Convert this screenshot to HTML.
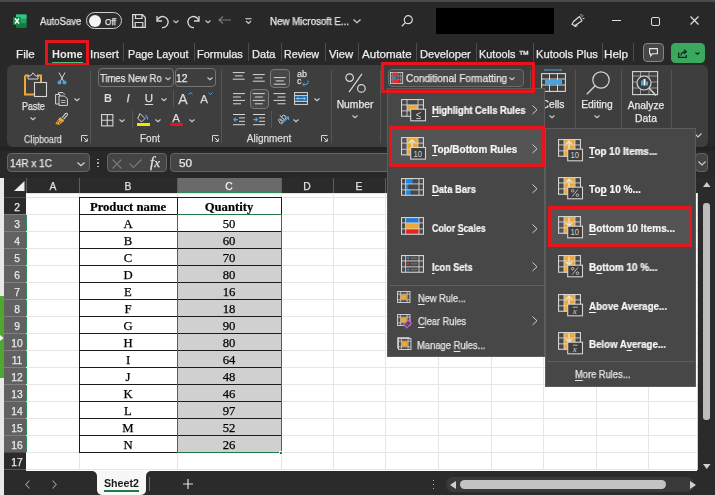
<!DOCTYPE html>
<html><head><meta charset="utf-8">
<style>
*{margin:0;padding:0;box-sizing:border-box}
html,body{width:715px;height:495px;overflow:hidden;background:#282828;font-family:"Liberation Sans",sans-serif;color:#e6e6e6;position:relative}
.a{position:absolute}
.t{position:absolute;white-space:nowrap;line-height:1;will-change:transform;-webkit-text-stroke:0.25px currentColor}
svg{position:absolute;overflow:visible}
u{text-decoration-thickness:1px;text-underline-offset:1.5px}
</style></head><body>
<div class="a" style="left:0px;top:0px;width:715px;height:2px;background:#4b4b4b;"></div>
<svg style="left:13px;top:14px;" width="14" height="14" viewBox="0 0 14 14"><rect x="3" y="0.5" width="10.5" height="13" rx="1" fill="#21a366"/>
 <rect x="3" y="0.5" width="10.5" height="4.3" fill="#33c481"/>
 <rect x="3" y="9.2" width="10.5" height="4.3" fill="#107c41"/>
 <rect x="0" y="3" width="8" height="8" rx="0.8" fill="#138a43"/>
 <path d="M2 4.5 L6 9.5 M6 4.5 L2 9.5" stroke="#fff" stroke-width="1.4"/></svg>
<div class="t" style="left:40.00px;top:17.1px;font-size:10px;color:#e8e8e8;font-weight:normal;font-family:'Liberation Sans',sans-serif;transform:scaleX(0.9535);transform-origin:0 0;">AutoSave</div>
<div class="a" style="left:86px;top:12px;width:36px;height:17px;background:#2e2e2e;border:1.4px solid #d0d0d0;border-radius:8.5px"></div>
<div class="a" style="left:88.8px;top:14.6px;width:12px;height:12px;background:#f4f4f4;border-radius:6px"></div>
<div class="t" style="left:104.50px;top:16.84px;font-size:9.5px;color:#e8e8e8;font-weight:normal;font-family:'Liberation Sans',sans-serif;transform:scaleX(0.8846);transform-origin:0 0;">Off</div>
<svg style="left:132px;top:14px;" width="14" height="14" viewBox="0 0 14 14"><path d="M0.7 0.7 H10.5 L13.3 3.5 V13.3 H0.7 Z" fill="none" stroke="#d8d8d8" stroke-width="1.3"/><path d="M3.5 0.7 V4.5 H10 V0.7" fill="none" stroke="#d8d8d8" stroke-width="1.2"/><path d="M3.2 13.3 V8.5 H10.8 V13.3" fill="none" stroke="#d8d8d8" stroke-width="1.2"/></svg>
<svg style="left:156px;top:15px;" width="13" height="13" viewBox="0 0 13 13"><path d="M1 1 V6 H6" fill="none" stroke="#d8d8d8" stroke-width="1.3"/><path d="M1.3 5.6 A5.5 5.5 0 1 1 6 12.5" fill="none" stroke="#d8d8d8" stroke-width="1.3"/></svg>
<svg style="left:173.0px;top:19.5px;" width="6" height="3.0" viewBox="0 0 6 3.0"><path d="M0.5 0.5 L3.0 2.7 L5.5 0.5" fill="none" stroke="#cfcfcf" stroke-width="1.1"/></svg>
<svg style="left:187px;top:15px;" width="13" height="13" viewBox="0 0 13 13"><path d="M12 1 V6 H7" fill="none" stroke="#d8d8d8" stroke-width="1.3"/><path d="M11.7 5.6 A5.5 5.5 0 1 0 7 12.5" fill="none" stroke="#d8d8d8" stroke-width="1.3"/></svg>
<svg style="left:204.5px;top:19.5px;" width="6" height="3.0" viewBox="0 0 6 3.0"><path d="M0.5 0.5 L3.0 2.7 L5.5 0.5" fill="none" stroke="#cfcfcf" stroke-width="1.1"/></svg>
<svg style="left:218px;top:16px;" width="13" height="8" viewBox="0 0 13 8"><path d="M5 0.5 L1 4 L5 7.5 M1 4 H13" fill="none" stroke="#7a7a7a" stroke-width="1.2"/></svg>
<svg style="left:245px;top:18px;" width="7" height="7" viewBox="0 0 7 7"><path d="M0.5 0.7 H6.5" stroke="#d0d0d0" stroke-width="1.1"/><path d="M1 3 L3.5 5.5 L6 3" fill="none" stroke="#d0d0d0" stroke-width="1.1"/></svg>
<div class="t" style="left:269.52px;top:17.1px;font-size:10px;color:#e8e8e8;font-weight:normal;font-family:'Liberation Sans',sans-serif;transform:scaleX(0.9750);transform-origin:0 0;">New Microsoft E...</div>
<svg style="left:353.0px;top:19.3px;" width="8" height="4.0" viewBox="0 0 8 4.0"><path d="M0.5 0.5 L4.0 3.7 L7.5 0.5" fill="none" stroke="#d0d0d0" stroke-width="1.2"/></svg>
<svg style="left:401px;top:15px;" width="12" height="12" viewBox="0 0 12 12"><circle cx="7.3" cy="4.7" r="4" fill="none" stroke="#d8d8d8" stroke-width="1.2"/><path d="M4.4 7.6 L0.8 11.2" stroke="#d8d8d8" stroke-width="1.3"/></svg>
<div class="a" style="left:436px;top:8px;width:117.5px;height:26px;background:#000;"></div>
<svg style="left:570.5px;top:14px;" width="14" height="13" viewBox="0 0 14 13"><path d="M1 10.5 L2.5 7.5 L8.5 2.5 L11 6.8 L4 11.5 Z" fill="none" stroke="#e0e0e0" stroke-width="1.1" stroke-linejoin="round"/><path d="M3 11.3 A1.6 1.6 0 1 0 6 10.3" fill="none" stroke="#e0e0e0" stroke-width="1"/><path d="M10.5 2.8 L12.3 1.5 M11.5 4.6 L13.5 4.4 M9.8 1.6 L10.4 0" stroke="#e0e0e0" stroke-width="0.9"/></svg>
<div class="a" style="left:611.5px;top:20px;width:9.0px;height:1.2px;background:#e0e0e0;"></div>
<div class="a" style="left:651px;top:16.8px;width:8.8px;height:8.8px;background:transparent;border:1.2px solid #e0e0e0;border-radius:2px"></div>
<svg style="left:690px;top:16px;" width="9" height="9" viewBox="0 0 9 9"><path d="M0.5 0.5 L8.5 8.5 M8.5 0.5 L0.5 8.5" stroke="#e0e0e0" stroke-width="1.2"/></svg>
<div class="t" style="left:15.87px;top:50.15px;font-size:10.3px;color:#ececec;font-weight:normal;font-family:'Liberation Sans',sans-serif;transform:scaleX(1.1333);transform-origin:0 0;">File</div>
<div class="t" style="left:52.00px;top:50.15px;font-size:10.3px;color:#ececec;font-weight:bold;font-family:'Liberation Sans',sans-serif;transform:scaleX(1.0690);transform-origin:0 0;-webkit-text-stroke:0;">Home</div>
<div class="t" style="left:89.88px;top:50.15px;font-size:10.3px;color:#ececec;font-weight:normal;font-family:'Liberation Sans',sans-serif;transform:scaleX(1.1200);transform-origin:0 0;">Insert</div>
<div class="t" style="left:127.75px;top:50.15px;font-size:10.3px;color:#ececec;font-weight:normal;font-family:'Liberation Sans',sans-serif;transform:scaleX(1.0474);transform-origin:0 0;">Page Layout</div>
<div class="t" style="left:197.43px;top:50.15px;font-size:10.3px;color:#ececec;font-weight:normal;font-family:'Liberation Sans',sans-serif;transform:scaleX(1.0690);transform-origin:0 0;">Formulas</div>
<div class="t" style="left:251.92px;top:50.15px;font-size:10.3px;color:#ececec;font-weight:normal;font-family:'Liberation Sans',sans-serif;transform:scaleX(1.0762);transform-origin:0 0;">Data</div>
<div class="t" style="left:284.46px;top:50.15px;font-size:10.3px;color:#ececec;font-weight:normal;font-family:'Liberation Sans',sans-serif;transform:scaleX(1.0394);transform-origin:0 0;">Review</div>
<div class="t" style="left:329.00px;top:50.15px;font-size:10.3px;color:#ececec;font-weight:normal;font-family:'Liberation Sans',sans-serif;transform:scaleX(1.0909);transform-origin:0 0;">View</div>
<div class="t" style="left:361.80px;top:50.15px;font-size:10.3px;color:#ececec;font-weight:normal;font-family:'Liberation Sans',sans-serif;transform:scaleX(1.1273);transform-origin:0 0;">Automate</div>
<div class="t" style="left:419.52px;top:50.15px;font-size:10.3px;color:#ececec;font-weight:normal;font-family:'Liberation Sans',sans-serif;transform:scaleX(1.0826);transform-origin:0 0;">Developer</div>
<div class="t" style="left:478.94px;top:50.15px;font-size:10.3px;color:#ececec;font-weight:normal;font-family:'Liberation Sans',sans-serif;transform:scaleX(1.0609);transform-origin:0 0;">Kutools ™</div>
<div class="t" style="left:536.12px;top:50.15px;font-size:10.3px;color:#ececec;font-weight:normal;font-family:'Liberation Sans',sans-serif;transform:scaleX(1.0821);transform-origin:0 0;">Kutools Plus</div>
<div class="t" style="left:604.36px;top:50.15px;font-size:10.3px;color:#ececec;font-weight:normal;font-family:'Liberation Sans',sans-serif;transform:scaleX(1.1400);transform-origin:0 0;">Help</div>
<div class="a" style="left:123px;top:43px;width:1px;height:18px;background:#4d4d4d;"></div>
<div class="a" style="left:194.3px;top:43px;width:1px;height:18px;background:#4d4d4d;"></div>
<div class="a" style="left:248.4px;top:43px;width:1px;height:18px;background:#4d4d4d;"></div>
<div class="a" style="left:281.3px;top:43px;width:1px;height:18px;background:#4d4d4d;"></div>
<div class="a" style="left:325.3px;top:43px;width:1px;height:18px;background:#4d4d4d;"></div>
<div class="a" style="left:357.5px;top:43px;width:1px;height:18px;background:#4d4d4d;"></div>
<div class="a" style="left:416px;top:43px;width:1px;height:18px;background:#4d4d4d;"></div>
<div class="a" style="left:476px;top:43px;width:1px;height:18px;background:#4d4d4d;"></div>
<div class="a" style="left:533px;top:43px;width:1px;height:18px;background:#4d4d4d;"></div>
<div class="a" style="left:602px;top:43px;width:1px;height:18px;background:#4d4d4d;"></div>
<div class="a" style="left:633px;top:43px;width:1px;height:18px;background:#4d4d4d;"></div>
<div class="a" style="left:52px;top:61.5px;width:31px;height:1.8px;background:#4fc27a;border-radius:1px"></div>
<div class="a" style="left:45.2px;top:40.3px;width:44.3px;height:25.5px;background:transparent;border:3.2px solid #e8141c"></div>
<div class="a" style="left:643.4px;top:42.9px;width:21.1px;height:19.6px;background:#474747;border:1.2px solid #858585;border-radius:4px"></div>
<svg style="left:649.3px;top:48.3px;" width="9" height="8.5" viewBox="0 0 9 8.5"><path d="M0.6 0.6 H8.4 V5.8 H3.5 L1.6 7.8 V5.8 H0.6 Z" fill="none" stroke="#e8e8e8" stroke-width="1.1"/></svg>
<div class="a" style="left:671.2px;top:42.9px;width:33.5px;height:20.1px;background:#3aa95e;border-radius:4.5px"></div>
<svg style="left:677.7px;top:49px;" width="10" height="9" viewBox="0 0 10 9"><path d="M0.7 3.5 V8.3 H8.3 V6" fill="none" stroke="#152a1c" stroke-width="1.3"/><path d="M3 6.5 C3 3.8 5 2.8 7.8 2.8 M6 0.8 L8.3 2.8 L6 4.8" fill="none" stroke="#152a1c" stroke-width="1.3"/></svg>
<svg style="left:695.3px;top:52.25px;" width="5" height="2.5" viewBox="0 0 5 2.5"><path d="M0.5 0.5 L2.5 2.2 L4.5 0.5" fill="none" stroke="#152a1c" stroke-width="1.3"/></svg>
<div class="a" style="left:0px;top:146px;width:715px;height:5px;background:#232323;"></div>
<div class="a" style="left:6.7px;top:64.6px;width:701px;height:82px;background:#3e3e3e;border-radius:6px"></div>
<svg style="left:24px;top:72px;" width="24" height="25" viewBox="0 0 24 25"><path d="M1 3.5 H5 M13 3.5 H17 V10 M1 3.5 V22.5 H10" fill="none" stroke="#f0a830" stroke-width="2"/>
<path d="M4 7 V4 H6.5 L9 0.8 L11.5 4 H14 V7 Z" fill="#3c3c3c" stroke="#d6d6d6" stroke-width="1"/>
<rect x="10.5" y="10.5" width="12" height="14" fill="#3c3c3c" stroke="#d6d6d6" stroke-width="1.1"/></svg>
<div class="t" style="left:21.73px;top:102.35px;font-size:10.3px;color:#e8e8e8;font-weight:normal;font-family:'Liberation Sans',sans-serif;transform:scaleX(0.8680);transform-origin:0 0;">Paste</div>
<svg style="left:30.4px;top:117.0px;" width="6" height="3.0" viewBox="0 0 6 3.0"><path d="M0.5 0.5 L3.0 2.7 L5.5 0.5" fill="none" stroke="#d0d0d0" stroke-width="1.1"/></svg>
<svg style="left:57px;top:72px;" width="10" height="13" viewBox="0 0 10 13"><path d="M2 0.5 L6.5 9 M8 0.5 L3.5 9" stroke="#d6d6d6" stroke-width="1"/><circle cx="2.5" cy="10.5" r="2" fill="#4aa3df"/><circle cx="7.5" cy="10.5" r="2" fill="#4aa3df"/></svg>
<svg style="left:55px;top:92px;" width="13" height="14" viewBox="0 0 13 14"><path d="M3.5 3 V0.6 H8 L10 2.6" fill="none" stroke="#d6d6d6" stroke-width="1"/><path d="M0.6 2.5 H5 V12 H0.6 Z" fill="none" stroke="#d6d6d6" stroke-width="1"/><path d="M4 4 H9.5 L12.4 6.9 V13.4 H4 Z" fill="#3c3c3c" stroke="#d6d6d6" stroke-width="1"/><path d="M6 8.5 H10.5 M6 10.5 H10.5" stroke="#d6d6d6" stroke-width="0.8"/></svg>
<svg style="left:73.6px;top:97.5px;" width="6" height="3.0" viewBox="0 0 6 3.0"><path d="M0.5 0.5 L3.0 2.7 L5.5 0.5" fill="none" stroke="#d0d0d0" stroke-width="1.1"/></svg>
<svg style="left:55px;top:112px;" width="13" height="13" viewBox="0 0 13 13"><path d="M7 6 L10.5 1.5 A1.2 1.2 0 0 1 12.3 3 L8.5 7.3" fill="none" stroke="#d6d6d6" stroke-width="1.1"/><path d="M0.8 11.5 L5 5.5 L8.8 8.8 L4 12.5 Z" fill="#f0a830" stroke="#f0a830" stroke-width="0.8"/><path d="M4 8 L2 11 M6 9 L4 12" stroke="#3c3c3c" stroke-width="0.7"/></svg>
<div class="t" style="left:24.20px;top:134.5px;font-size:10px;color:#dcdcdc;font-weight:normal;font-family:'Liberation Sans',sans-serif;transform:scaleX(0.8791);transform-origin:0 0;">Clipboard</div>
<svg style="left:81px;top:135px;" width="7" height="7" viewBox="0 0 7 7"><path d="M0.5 6.5 V0.5 H6.5" fill="none" stroke="#d6d6d6" stroke-width="1"/><path d="M2.5 2.5 L6 6 M3.5 6.3 H6.3 V3.5" fill="none" stroke="#d6d6d6" stroke-width="1"/></svg>
<div class="a" style="left:90px;top:70px;width:1px;height:73px;background:#555555;"></div>
<div class="a" style="left:97.5px;top:67.8px;width:76px;height:19.5px;background:transparent;border:1px solid #747474;border-radius:4px"></div>
<div class="t" style="left:100.10px;top:73.95px;font-size:10.3px;color:#e8e8e8;font-weight:normal;font-family:'Liberation Sans',sans-serif;transform:scaleX(0.9179);transform-origin:0 0;">Times New Ro</div>
<svg style="left:165.0px;top:76.5px;" width="6" height="3.0" viewBox="0 0 6 3.0"><path d="M0.5 0.5 L3.0 2.7 L5.5 0.5" fill="none" stroke="#d0d0d0" stroke-width="1.1"/></svg>
<div class="a" style="left:175px;top:67.8px;width:40.5px;height:19.5px;background:transparent;border:1px solid #747474;border-radius:4px"></div>
<div class="t" style="left:176.29px;top:73.95px;font-size:10.3px;color:#e8e8e8;font-weight:normal;font-family:'Liberation Sans',sans-serif;transform:scaleX(1.0100);transform-origin:0 0;">12</div>
<svg style="left:207.0px;top:76.5px;" width="6" height="3.0" viewBox="0 0 6 3.0"><path d="M0.5 0.5 L3.0 2.7 L5.5 0.5" fill="none" stroke="#d0d0d0" stroke-width="1.1"/></svg>
<div class="t" style="left:7.599999999999994px;width:200px;text-align:center;top:93.41px;font-size:11px;color:#dcdcdc;font-weight:bold;font-family:'Liberation Sans',sans-serif;-webkit-text-stroke:0;">B</div>
<div class="t" style="left:28.30000000000001px;width:200px;text-align:center;top:93.16px;font-size:11.5px;color:#dcdcdc;font-weight:normal;font-family:'Liberation Sans',sans-serif;"><i>I</i></div>
<div class="t" style="left:49px;width:200px;text-align:center;top:92.66px;font-size:11.5px;color:#dcdcdc;font-weight:normal;font-family:'Liberation Sans',sans-serif;"><u>U</u></div>
<svg style="left:161.3px;top:97.5px;" width="6" height="3.0" viewBox="0 0 6 3.0"><path d="M0.5 0.5 L3.0 2.7 L5.5 0.5" fill="none" stroke="#d0d0d0" stroke-width="1.1"/></svg>
<div class="a" style="left:173px;top:90px;width:1px;height:18px;background:#555555;"></div>
<div class="t" style="left:83.30000000000001px;width:200px;text-align:center;top:91.94px;font-size:14px;color:#dcdcdc;font-weight:normal;font-family:'Liberation Sans',sans-serif;">A</div>
<svg style="left:187.5px;top:92px;" width="5" height="3" viewBox="0 0 5 3"><path d="M0.5 2.5 L2.5 0.5 L4.5 2.5" fill="none" stroke="#4aa3df" stroke-width="1"/></svg>
<div class="t" style="left:104px;width:200px;text-align:center;top:94.16px;font-size:11.5px;color:#dcdcdc;font-weight:normal;font-family:'Liberation Sans',sans-serif;">A</div>
<svg style="left:208px;top:92px;" width="5" height="3" viewBox="0 0 5 3"><path d="M0.5 0.5 L2.5 2.5 L4.5 0.5" fill="none" stroke="#4aa3df" stroke-width="1"/></svg>
<svg style="left:101px;top:113.5px;" width="12.5" height="12.5" viewBox="0 0 12.5 12.5"><rect x="0.6" y="0.6" width="11.3" height="11.3" fill="none" stroke="#d6d6d6" stroke-width="1.1"/><path d="M6.25 0.6 V11.9 M0.6 6.25 H11.9" stroke="#d6d6d6" stroke-width="1.1"/></svg>
<svg style="left:119.3px;top:118.5px;" width="6" height="3.0" viewBox="0 0 6 3.0"><path d="M0.5 0.5 L3.0 2.7 L5.5 0.5" fill="none" stroke="#d0d0d0" stroke-width="1.1"/></svg>
<div class="a" style="left:131.5px;top:111px;width:1px;height:17px;background:#555555;"></div>
<svg style="left:136.5px;top:112px;" width="13" height="15" viewBox="0 0 13 15"><path d="M3 1.5 L8 6.5 L4.5 10 L0.8 6.3 Z" fill="none" stroke="#d6d6d6" stroke-width="1"/><path d="M8.5 3 Q11 5 10.5 7.5" fill="none" stroke="#4aa3df" stroke-width="1.1"/><rect x="0" y="11" width="13" height="3" fill="#f7e400"/></svg>
<svg style="left:155.0px;top:118.5px;" width="6" height="3.0" viewBox="0 0 6 3.0"><path d="M0.5 0.5 L3.0 2.7 L5.5 0.5" fill="none" stroke="#d0d0d0" stroke-width="1.1"/></svg>
<div class="t" style="left:76.30000000000001px;width:200px;text-align:center;top:113.16px;font-size:11.5px;color:#dcdcdc;font-weight:normal;font-family:'Liberation Sans',sans-serif;">A</div>
<div class="a" style="left:170px;top:123px;width:13px;height:3px;background:#e3141c;"></div>
<svg style="left:188.5px;top:118.5px;" width="6" height="3.0" viewBox="0 0 6 3.0"><path d="M0.5 0.5 L3.0 2.7 L5.5 0.5" fill="none" stroke="#d0d0d0" stroke-width="1.1"/></svg>
<div class="t" style="left:50px;width:200px;text-align:center;top:134.4px;font-size:10px;color:#dcdcdc;font-weight:normal;font-family:'Liberation Sans',sans-serif;">Font</div>
<svg style="left:212px;top:135px;" width="7" height="7" viewBox="0 0 7 7"><path d="M0.5 6.5 V0.5 H6.5" fill="none" stroke="#d6d6d6" stroke-width="1"/><path d="M2.5 2.5 L6 6 M3.5 6.3 H6.3 V3.5" fill="none" stroke="#d6d6d6" stroke-width="1"/></svg>
<div class="a" style="left:221px;top:70px;width:1px;height:73px;background:#555555;"></div>
<svg style="left:232.5px;top:71.5px;" width="12" height="12" viewBox="0 0 12 12"><path d="M-0.25 0.6 H11.75" stroke="#d6d6d6" stroke-width="1"/><path d="M1.75 3.9 H9.75" stroke="#d6d6d6" stroke-width="1"/><path d="M-0.25 7.199999999999999 H11.75" stroke="#d6d6d6" stroke-width="1"/></svg>
<svg style="left:253px;top:73.8px;" width="12" height="12" viewBox="0 0 12 12"><path d="M-0.25 0.6 H11.75" stroke="#d6d6d6" stroke-width="1"/><path d="M1.75 3.9 H9.75" stroke="#d6d6d6" stroke-width="1"/><path d="M-0.25 7.199999999999999 H11.75" stroke="#d6d6d6" stroke-width="1"/></svg>
<div class="a" style="left:270px;top:68.5px;width:20px;height:19px;background:transparent;border:1px solid #7a7a7a;border-radius:4px;background:#474747"></div>
<svg style="left:274px;top:76.7px;" width="12" height="12" viewBox="0 0 12 12"><path d="M-0.25 0.6 H11.75" stroke="#d6d6d6" stroke-width="1"/><path d="M1.75 3.9 H9.75" stroke="#d6d6d6" stroke-width="1"/><path d="M-0.25 7.199999999999999 H11.75" stroke="#d6d6d6" stroke-width="1"/></svg>
<div class="t" style="left:297.00px;top:69.59px;font-size:9px;color:#dcdcdc;font-weight:normal;font-family:'Liberation Sans',sans-serif;">ab</div>
<div class="t" style="left:297.00px;top:77.09px;font-size:9px;color:#dcdcdc;font-weight:normal;font-family:'Liberation Sans',sans-serif;">c</div>
<svg style="left:302px;top:80px;" width="7" height="6" viewBox="0 0 7 6"><path d="M6 0.5 V2.5 Q6 4.5 3 4.5 H0.8 M2.5 3 L0.8 4.5 L2.5 6" fill="none" stroke="#4aa3df" stroke-width="1"/></svg>
<svg style="left:232.5px;top:92.8px;" width="12" height="12" viewBox="0 0 12 12"><path d="M0 0.6 H12" stroke="#d6d6d6" stroke-width="1"/><path d="M0 4.0 H8" stroke="#d6d6d6" stroke-width="1"/><path d="M0 7.3999999999999995 H12" stroke="#d6d6d6" stroke-width="1"/><path d="M0 10.799999999999999 H8" stroke="#d6d6d6" stroke-width="1"/></svg>
<div class="a" style="left:249.5px;top:89px;width:19.5px;height:20px;background:transparent;border:1px solid #7a7a7a;border-radius:4px;background:#474747"></div>
<svg style="left:253px;top:92.8px;" width="12" height="12" viewBox="0 0 12 12"><path d="M-0.25 0.6 H11.75" stroke="#d6d6d6" stroke-width="1"/><path d="M1.75 4.0 H9.75" stroke="#d6d6d6" stroke-width="1"/><path d="M-0.25 7.3999999999999995 H11.75" stroke="#d6d6d6" stroke-width="1"/><path d="M1.75 10.799999999999999 H9.75" stroke="#d6d6d6" stroke-width="1"/></svg>
<svg style="left:274px;top:92.8px;" width="12" height="12" viewBox="0 0 12 12"><path d="M-0.5 0.6 H11.5" stroke="#d6d6d6" stroke-width="1"/><path d="M3.5 4.0 H11.5" stroke="#d6d6d6" stroke-width="1"/><path d="M-0.5 7.3999999999999995 H11.5" stroke="#d6d6d6" stroke-width="1"/><path d="M3.5 10.799999999999999 H11.5" stroke="#d6d6d6" stroke-width="1"/></svg>
<svg style="left:294px;top:92px;" width="14" height="13" viewBox="0 0 14 13"><rect x="0.6" y="0.6" width="12.8" height="11.8" fill="none" stroke="#d6d6d6" stroke-width="1"/><path d="M0.6 3.5 H13.4 M0.6 9.5 H13.4" stroke="#d6d6d6" stroke-width="0.9"/><rect x="1" y="4" width="12" height="5" fill="#2a6fa5"/><path d="M2.5 6.5 H11.5 M4.5 5 L2.5 6.5 L4.5 8 M9.5 5 L11.5 6.5 L9.5 8" fill="none" stroke="#7cc4f2" stroke-width="0.9"/></svg>
<svg style="left:313.8px;top:97.5px;" width="6" height="3.0" viewBox="0 0 6 3.0"><path d="M0.5 0.5 L3.0 2.7 L5.5 0.5" fill="none" stroke="#d0d0d0" stroke-width="1.1"/></svg>
<svg style="left:232.5px;top:113.8px;" width="12" height="12" viewBox="0 0 12 12"><path d="M0 0.5 H12 M6 3.9 H12 M6 7.3 H12 M0 10.7 H12" stroke="#d6d6d6" stroke-width="1"/><path d="M0.8 5.6 H5 M2.8 3.6 L0.8 5.6 L2.8 7.6" fill="none" stroke="#4aa3df" stroke-width="1.1"/></svg>
<svg style="left:253px;top:113.8px;" width="12" height="12" viewBox="0 0 12 12"><path d="M0 0.5 H12 M6 3.9 H12 M6 7.3 H12 M0 10.7 H12" stroke="#d6d6d6" stroke-width="1"/><path d="M0.3 5.6 H4.6 M2.6 3.6 L4.6 5.6 L2.6 7.6" fill="none" stroke="#4aa3df" stroke-width="1.1"/></svg>
<div class="a" style="left:271px;top:111px;width:1px;height:17px;background:#555555;"></div>
<svg style="left:275.5px;top:112px;" width="14" height="14" viewBox="0 0 14 14"><text x="0" y="10" font-size="9" fill="#d6d6d6" transform="rotate(-45 5 6)" font-family="Liberation Sans">ab</text><path d="M5 12.5 L12.5 5 M9.5 5 H12.5 V8" fill="none" stroke="#4aa3df" stroke-width="1.1"/></svg>
<svg style="left:293.0px;top:118.5px;" width="6" height="3.0" viewBox="0 0 6 3.0"><path d="M0.5 0.5 L3.0 2.7 L5.5 0.5" fill="none" stroke="#d0d0d0" stroke-width="1.1"/></svg>
<div class="t" style="left:169px;width:200px;text-align:center;top:134.4px;font-size:10px;color:#dcdcdc;font-weight:normal;font-family:'Liberation Sans',sans-serif;">Alignment</div>
<svg style="left:321px;top:135px;" width="7" height="7" viewBox="0 0 7 7"><path d="M0.5 6.5 V0.5 H6.5" fill="none" stroke="#d6d6d6" stroke-width="1"/><path d="M2.5 2.5 L6 6 M3.5 6.3 H6.3 V3.5" fill="none" stroke="#d6d6d6" stroke-width="1"/></svg>
<div class="a" style="left:331px;top:70px;width:1px;height:73px;background:#555555;"></div>
<svg style="left:344.5px;top:73px;" width="21" height="20" viewBox="0 0 21 20"><circle cx="4.6" cy="4.6" r="3.8" fill="none" stroke="#d8d8d8" stroke-width="1.2"/><circle cx="16.4" cy="15.4" r="3.8" fill="none" stroke="#d8d8d8" stroke-width="1.2"/><path d="M17 0.8 L4 19.2" stroke="#d8d8d8" stroke-width="1.2"/></svg>
<div class="t" style="left:254.8px;width:200px;text-align:center;top:99.75px;font-size:10.3px;color:#e8e8e8;font-weight:normal;font-family:'Liberation Sans',sans-serif;">Number</div>
<svg style="left:351.8px;top:114.8px;" width="6" height="3.0" viewBox="0 0 6 3.0"><path d="M0.5 0.5 L3.0 2.7 L5.5 0.5" fill="none" stroke="#d0d0d0" stroke-width="1.1"/></svg>
<div class="a" style="left:379.5px;top:70px;width:1px;height:73px;background:#555555;"></div>
<div class="a" style="left:387.5px;top:69px;width:136px;height:18px;background:#474747;border:1px solid #6a6a6a;border-radius:4px"></div>
<svg style="left:390px;top:71.8px;" width="13.2" height="12" viewBox="0 0 13.2 12"><rect x="0.5" y="0.5" width="12.2" height="11" fill="none" stroke="#d0d0d0" stroke-width="0.9"/><path d="M0.5 4 H12.7 M0.5 7.8 H12.7 M2.3 0.5 V11.5 M8.1 0.5 V11.5 M10.7 0.5 V11.5" stroke="#a0a0a0" stroke-width="0.6"/><rect x="2.9" y="0.6" width="5" height="3.1" fill="#ee2a2a"/><rect x="3" y="4.5" width="3" height="2.7" rx="1" fill="#2a8ae0"/><rect x="2.9" y="7.9" width="6" height="3.3" fill="#ee2a2a"/></svg>
<div class="t" style="left:406.40px;top:74.25px;font-size:10.3px;color:#e8e8e8;font-weight:normal;font-family:'Liberation Sans',sans-serif;transform:scaleX(0.9767);transform-origin:0 0;">Conditional Formatting</div>
<svg style="left:509.4px;top:76.5px;" width="6" height="3.0" viewBox="0 0 6 3.0"><path d="M0.5 0.5 L3.0 2.7 L5.5 0.5" fill="none" stroke="#d0d0d0" stroke-width="1.1"/></svg>
<div class="a" style="left:529.5px;top:70px;width:1px;height:18px;background:#555555;"></div>
<svg style="left:541px;top:69px;" width="25" height="23" viewBox="0 0 25 23"><path d="M4 1 H20 M4 0 V2 M20 0 V2" stroke="#4aa3df" stroke-width="1"/><rect x="0.6" y="4.6" width="23.8" height="17.8" fill="none" stroke="#d6d6d6" stroke-width="1.1"/><path d="M0.6 10 H24.4 M0.6 16 H24.4 M8.5 4.6 V22.4 M16.5 4.6 V22.4" stroke="#d6d6d6" stroke-width="1"/><rect x="4" y="11" width="17" height="4.5" fill="#4aa3df"/></svg>
<div class="t" style="left:453px;width:200px;text-align:center;top:99.55px;font-size:10.3px;color:#e8e8e8;font-weight:normal;font-family:'Liberation Sans',sans-serif;">Cells</div>
<svg style="left:548.6px;top:114.8px;" width="6" height="3.0" viewBox="0 0 6 3.0"><path d="M0.5 0.5 L3.0 2.7 L5.5 0.5" fill="none" stroke="#d0d0d0" stroke-width="1.1"/></svg>
<div class="a" style="left:575px;top:70px;width:1px;height:73px;background:#555555;"></div>
<svg style="left:585.5px;top:70.5px;" width="24" height="24" viewBox="0 0 24 24"><circle cx="15" cy="9" r="8.2" fill="none" stroke="#d6d6d6" stroke-width="1.2"/><path d="M9.2 14.8 L0.8 23.2" stroke="#d6d6d6" stroke-width="1.3"/></svg>
<div class="t" style="left:497.29999999999995px;width:200px;text-align:center;top:99.55px;font-size:10.3px;color:#e8e8e8;font-weight:normal;font-family:'Liberation Sans',sans-serif;">Editing</div>
<svg style="left:594.3px;top:114.8px;" width="6" height="3.0" viewBox="0 0 6 3.0"><path d="M0.5 0.5 L3.0 2.7 L5.5 0.5" fill="none" stroke="#d0d0d0" stroke-width="1.1"/></svg>
<div class="a" style="left:620.7px;top:70px;width:1px;height:73px;background:#555555;"></div>
<svg style="left:632px;top:70.5px;" width="27" height="27" viewBox="0 0 27 27"><rect x="0.6" y="0.6" width="25" height="23" fill="none" stroke="#d6d6d6" stroke-width="1.1"/><path d="M0.6 5 H25.6 M0.6 11 H25.6 M0.6 17 H25.6 M8.5 0.6 V23.6 M17 0.6 V23.6" stroke="#d6d6d6" stroke-width="0.6"/><circle cx="12" cy="12" r="7" fill="#3c3c3c" stroke="#d6d6d6" stroke-width="1.2"/><rect x="9" y="9.5" width="2" height="5" fill="#4aa3df"/><rect x="11.5" y="8" width="2" height="6.5" fill="#ffffff"/><rect x="14" y="10.5" width="2" height="4" fill="#4aa3df"/><path d="M17 17 L24 24.5" stroke="#d6d6d6" stroke-width="1.5"/></svg>
<div class="t" style="left:545.6px;width:200px;text-align:center;top:101.45px;font-size:10.3px;color:#e8e8e8;font-weight:normal;font-family:'Liberation Sans',sans-serif;">Analyze</div>
<div class="t" style="left:545.6px;width:200px;text-align:center;top:113.75px;font-size:10.3px;color:#e8e8e8;font-weight:normal;font-family:'Liberation Sans',sans-serif;">Data</div>
<div class="a" style="left:670.6px;top:70px;width:1px;height:73px;background:#555555;"></div>
<svg style="left:693.5px;top:133px;" width="8" height="5" viewBox="0 0 8 5"><path d="M0.5 0.5 L4 4 L7.5 0.5" fill="none" stroke="#d0d0d0" stroke-width="1.1"/></svg>
<div class="a" style="left:6.5px;top:152.8px;width:83px;height:19.5px;background:#444444;border:1px solid #646464;border-radius:4px"></div>
<div class="t" style="left:10.32px;top:159.25px;font-size:10.3px;color:#e8e8e8;font-weight:normal;font-family:'Liberation Sans',sans-serif;transform:scaleX(0.9786);transform-origin:0 0;">14R x 1C</div>
<svg style="left:77.2px;top:162.2px;" width="8" height="4.0" viewBox="0 0 8 4.0"><path d="M0.5 0.5 L4.0 3.7 L7.5 0.5" fill="none" stroke="#d8d8d8" stroke-width="1.2"/></svg>
<div class="a" style="left:97.3px;top:158.6px;width:1.8px;height:1.8px;background:#d0d0d0;border-radius:1px"></div>
<div class="a" style="left:97.3px;top:162.1px;width:1.8px;height:1.8px;background:#d0d0d0;border-radius:1px"></div>
<div class="a" style="left:97.3px;top:165.6px;width:1.8px;height:1.8px;background:#d0d0d0;border-radius:1px"></div>
<div class="a" style="left:106.5px;top:152.8px;width:60px;height:19.5px;background:#444444;border:1px solid #646464;border-radius:4px"></div>
<svg style="left:112px;top:158.5px;" width="10" height="10" viewBox="0 0 10 10"><path d="M0.5 0.5 L9.5 9.5 M9.5 0.5 L0.5 9.5" stroke="#7a7a7a" stroke-width="1.1"/></svg>
<svg style="left:129px;top:159px;" width="13" height="9" viewBox="0 0 13 9"><path d="M0.5 4.5 L4.5 8.5 L12.5 0.5" fill="none" stroke="#7a7a7a" stroke-width="1.1"/></svg>
<div class="t" style="left:150.00px;top:154.8px;font-size:15px;color:#e2e2e2;font-weight:normal;font-family:'Liberation Serif',serif;"><i>f</i><i style="font-size:13px">x</i></div>
<div class="a" style="left:169.5px;top:152.8px;width:525.5px;height:19.5px;background:#444444;border:1px solid #646464;border-radius:4px"></div>
<div class="t" style="left:178.70px;top:159.15px;font-size:10.3px;color:#e8e8e8;font-weight:normal;font-family:'Liberation Sans',sans-serif;transform:scaleX(1.1455);transform-origin:0 0;">50</div>
<div class="a" style="left:695px;top:152.8px;width:13px;height:19.5px;background:#444444;border:1px solid #646464;border-radius:4px"></div>
<svg style="left:697.5px;top:161px;" width="8" height="5" viewBox="0 0 8 5"><path d="M0.5 0.5 L4 4 L7.5 0.5" fill="none" stroke="#d0d0d0" stroke-width="1.1"/></svg>
<div class="a" style="left:26px;top:193px;width:671px;height:278px;background:#ffffff;"></div>
<div class="a" style="left:0px;top:178px;width:4.2px;height:317px;background:#e8e8e8;"></div>
<div class="a" style="left:0px;top:296px;width:4.2px;height:82px;background:#4ea72e;"></div>
<svg style="left:0px;top:335px;" width="4" height="6" viewBox="0 0 4 6"><path d="M0 0 L3.5 3 L0 6 Z" fill="#fff"/></svg>
<div class="a" style="left:4.2px;top:178px;width:692.8px;height:15px;background:#2b2b2b;"></div>
<div class="a" style="left:177px;top:178px;width:104px;height:15px;background:#6a6a6a;"></div>
<div class="a" style="left:177px;top:192.2px;width:104px;height:1.4px;background:#2e8b57;"></div>
<div class="a" style="left:25.5px;top:178px;width:1.2px;height:15px;background:#5e5e5e;"></div>
<div class="a" style="left:78.5px;top:178px;width:1.2px;height:15px;background:#5e5e5e;"></div>
<div class="a" style="left:176.5px;top:178px;width:1.2px;height:15px;background:#5e5e5e;"></div>
<div class="a" style="left:280.5px;top:178px;width:1.2px;height:15px;background:#5e5e5e;"></div>
<div class="a" style="left:332.5px;top:178px;width:1.2px;height:15px;background:#5e5e5e;"></div>
<div class="a" style="left:384.5px;top:178px;width:1.2px;height:15px;background:#5e5e5e;"></div>
<div class="a" style="left:437.5px;top:178px;width:1.2px;height:15px;background:#5e5e5e;"></div>
<div class="a" style="left:490.5px;top:178px;width:1.2px;height:15px;background:#5e5e5e;"></div>
<div class="a" style="left:542.5px;top:178px;width:1.2px;height:15px;background:#5e5e5e;"></div>
<div class="a" style="left:595.5px;top:178px;width:1.2px;height:15px;background:#5e5e5e;"></div>
<div class="a" style="left:647.5px;top:178px;width:1.2px;height:15px;background:#5e5e5e;"></div>
<div class="t" style="left:-47.5px;width:200px;text-align:center;top:182.05px;font-size:10.3px;color:#e0e0e0;font-weight:normal;font-family:'Liberation Sans',sans-serif;">A</div>
<div class="t" style="left:28.0px;width:200px;text-align:center;top:182.05px;font-size:10.3px;color:#e0e0e0;font-weight:normal;font-family:'Liberation Sans',sans-serif;">B</div>
<div class="t" style="left:129.0px;width:200px;text-align:center;top:182.05px;font-size:10.3px;color:#f0f0f0;font-weight:normal;font-family:'Liberation Sans',sans-serif;">C</div>
<div class="t" style="left:207.0px;width:200px;text-align:center;top:182.05px;font-size:10.3px;color:#e0e0e0;font-weight:normal;font-family:'Liberation Sans',sans-serif;">D</div>
<div class="t" style="left:259.0px;width:200px;text-align:center;top:182.05px;font-size:10.3px;color:#e0e0e0;font-weight:normal;font-family:'Liberation Sans',sans-serif;">E</div>
<div class="t" style="left:311.5px;width:200px;text-align:center;top:182.05px;font-size:10.3px;color:#e0e0e0;font-weight:normal;font-family:'Liberation Sans',sans-serif;">F</div>
<div class="t" style="left:364.5px;width:200px;text-align:center;top:182.05px;font-size:10.3px;color:#e0e0e0;font-weight:normal;font-family:'Liberation Sans',sans-serif;">G</div>
<div class="t" style="left:417.0px;width:200px;text-align:center;top:182.05px;font-size:10.3px;color:#e0e0e0;font-weight:normal;font-family:'Liberation Sans',sans-serif;">H</div>
<div class="t" style="left:469.5px;width:200px;text-align:center;top:182.05px;font-size:10.3px;color:#e0e0e0;font-weight:normal;font-family:'Liberation Sans',sans-serif;">I</div>
<div class="t" style="left:522.0px;width:200px;text-align:center;top:182.05px;font-size:10.3px;color:#e0e0e0;font-weight:normal;font-family:'Liberation Sans',sans-serif;">J</div>
<div class="t" style="left:572.5px;width:200px;text-align:center;top:182.05px;font-size:10.3px;color:#e0e0e0;font-weight:normal;font-family:'Liberation Sans',sans-serif;">K</div>
<svg style="left:14px;top:181px;" width="11" height="10" viewBox="0 0 11 10"><path d="M10.5 0 V10 H0 Z" fill="#f0f0f0"/></svg>
<div class="a" style="left:4.2px;top:193px;width:21.8px;height:277px;background:#2b2b2b;"></div>
<div class="a" style="left:4.2px;top:197px;width:21.8px;height:17px;background:#2b2b2b;"></div>
<div class="a" style="left:4.2px;top:197px;width:21.8px;height:1px;background:#4a4a4a;"></div>
<div class="t" style="left:-83.5px;width:200px;text-align:center;top:202.95px;font-size:10.3px;color:#e8e8e8;font-weight:normal;font-family:'Liberation Sans',sans-serif;">2</div>
<div class="a" style="left:4.2px;top:214px;width:21.8px;height:17px;background:#616161;"></div>
<div class="a" style="left:4.2px;top:214px;width:21.8px;height:1px;background:#808080;"></div>
<div class="t" style="left:-83.5px;width:200px;text-align:center;top:219.95px;font-size:10.3px;color:#e8e8e8;font-weight:normal;font-family:'Liberation Sans',sans-serif;">3</div>
<div class="a" style="left:4.2px;top:231px;width:21.8px;height:17px;background:#616161;"></div>
<div class="a" style="left:4.2px;top:231px;width:21.8px;height:1px;background:#808080;"></div>
<div class="t" style="left:-83.5px;width:200px;text-align:center;top:236.95px;font-size:10.3px;color:#e8e8e8;font-weight:normal;font-family:'Liberation Sans',sans-serif;">4</div>
<div class="a" style="left:4.2px;top:248px;width:21.8px;height:17px;background:#616161;"></div>
<div class="a" style="left:4.2px;top:248px;width:21.8px;height:1px;background:#808080;"></div>
<div class="t" style="left:-83.5px;width:200px;text-align:center;top:253.95px;font-size:10.3px;color:#e8e8e8;font-weight:normal;font-family:'Liberation Sans',sans-serif;">5</div>
<div class="a" style="left:4.2px;top:265px;width:21.8px;height:17px;background:#616161;"></div>
<div class="a" style="left:4.2px;top:265px;width:21.8px;height:1px;background:#808080;"></div>
<div class="t" style="left:-83.5px;width:200px;text-align:center;top:270.95px;font-size:10.3px;color:#e8e8e8;font-weight:normal;font-family:'Liberation Sans',sans-serif;">6</div>
<div class="a" style="left:4.2px;top:282px;width:21.8px;height:17px;background:#616161;"></div>
<div class="a" style="left:4.2px;top:282px;width:21.8px;height:1px;background:#808080;"></div>
<div class="t" style="left:-83.5px;width:200px;text-align:center;top:287.95px;font-size:10.3px;color:#e8e8e8;font-weight:normal;font-family:'Liberation Sans',sans-serif;">7</div>
<div class="a" style="left:4.2px;top:299px;width:21.8px;height:17px;background:#616161;"></div>
<div class="a" style="left:4.2px;top:299px;width:21.8px;height:1px;background:#808080;"></div>
<div class="t" style="left:-83.5px;width:200px;text-align:center;top:304.95px;font-size:10.3px;color:#e8e8e8;font-weight:normal;font-family:'Liberation Sans',sans-serif;">8</div>
<div class="a" style="left:4.2px;top:316px;width:21.8px;height:17px;background:#616161;"></div>
<div class="a" style="left:4.2px;top:316px;width:21.8px;height:1px;background:#808080;"></div>
<div class="t" style="left:-83.5px;width:200px;text-align:center;top:321.95px;font-size:10.3px;color:#e8e8e8;font-weight:normal;font-family:'Liberation Sans',sans-serif;">9</div>
<div class="a" style="left:4.2px;top:333px;width:21.8px;height:17px;background:#616161;"></div>
<div class="a" style="left:4.2px;top:333px;width:21.8px;height:1px;background:#808080;"></div>
<div class="t" style="left:-83.5px;width:200px;text-align:center;top:338.95px;font-size:10.3px;color:#e8e8e8;font-weight:normal;font-family:'Liberation Sans',sans-serif;">10</div>
<div class="a" style="left:4.2px;top:350px;width:21.8px;height:17px;background:#616161;"></div>
<div class="a" style="left:4.2px;top:350px;width:21.8px;height:1px;background:#808080;"></div>
<div class="t" style="left:-83.5px;width:200px;text-align:center;top:355.95px;font-size:10.3px;color:#e8e8e8;font-weight:normal;font-family:'Liberation Sans',sans-serif;">11</div>
<div class="a" style="left:4.2px;top:367px;width:21.8px;height:17px;background:#616161;"></div>
<div class="a" style="left:4.2px;top:367px;width:21.8px;height:1px;background:#808080;"></div>
<div class="t" style="left:-83.5px;width:200px;text-align:center;top:372.95px;font-size:10.3px;color:#e8e8e8;font-weight:normal;font-family:'Liberation Sans',sans-serif;">12</div>
<div class="a" style="left:4.2px;top:384px;width:21.8px;height:17px;background:#616161;"></div>
<div class="a" style="left:4.2px;top:384px;width:21.8px;height:1px;background:#808080;"></div>
<div class="t" style="left:-83.5px;width:200px;text-align:center;top:389.95px;font-size:10.3px;color:#e8e8e8;font-weight:normal;font-family:'Liberation Sans',sans-serif;">13</div>
<div class="a" style="left:4.2px;top:401px;width:21.8px;height:17px;background:#616161;"></div>
<div class="a" style="left:4.2px;top:401px;width:21.8px;height:1px;background:#808080;"></div>
<div class="t" style="left:-83.5px;width:200px;text-align:center;top:406.95px;font-size:10.3px;color:#e8e8e8;font-weight:normal;font-family:'Liberation Sans',sans-serif;">14</div>
<div class="a" style="left:4.2px;top:418px;width:21.8px;height:17px;background:#616161;"></div>
<div class="a" style="left:4.2px;top:418px;width:21.8px;height:1px;background:#808080;"></div>
<div class="t" style="left:-83.5px;width:200px;text-align:center;top:423.95px;font-size:10.3px;color:#e8e8e8;font-weight:normal;font-family:'Liberation Sans',sans-serif;">15</div>
<div class="a" style="left:4.2px;top:435px;width:21.8px;height:17px;background:#616161;"></div>
<div class="a" style="left:4.2px;top:435px;width:21.8px;height:1px;background:#808080;"></div>
<div class="t" style="left:-83.5px;width:200px;text-align:center;top:440.95px;font-size:10.3px;color:#e8e8e8;font-weight:normal;font-family:'Liberation Sans',sans-serif;">16</div>
<div class="a" style="left:4.2px;top:452px;width:21.8px;height:17px;background:#2b2b2b;"></div>
<div class="a" style="left:4.2px;top:452px;width:21.8px;height:1px;background:#4a4a4a;"></div>
<div class="t" style="left:-83.5px;width:200px;text-align:center;top:457.95px;font-size:10.3px;color:#e8e8e8;font-weight:normal;font-family:'Liberation Sans',sans-serif;">17</div>
<div class="a" style="left:25.8px;top:214px;width:1.5px;height:238px;background:#2e8b57;"></div>
<div class="a" style="left:4.2px;top:469px;width:21.8px;height:1px;background:#5a5a5a;"></div>
<div class="a" style="left:78.5px;top:193px;width:1px;height:277px;background:#e6e6e6;"></div>
<div class="a" style="left:176.5px;top:193px;width:1px;height:277px;background:#e6e6e6;"></div>
<div class="a" style="left:280.5px;top:193px;width:1px;height:277px;background:#e6e6e6;"></div>
<div class="a" style="left:332.5px;top:193px;width:1px;height:277px;background:#e6e6e6;"></div>
<div class="a" style="left:384.5px;top:193px;width:1px;height:277px;background:#e6e6e6;"></div>
<div class="a" style="left:437.5px;top:193px;width:1px;height:277px;background:#e6e6e6;"></div>
<div class="a" style="left:490.5px;top:193px;width:1px;height:277px;background:#e6e6e6;"></div>
<div class="a" style="left:542.5px;top:193px;width:1px;height:277px;background:#e6e6e6;"></div>
<div class="a" style="left:595.5px;top:193px;width:1px;height:277px;background:#e6e6e6;"></div>
<div class="a" style="left:647.5px;top:193px;width:1px;height:277px;background:#e6e6e6;"></div>
<div class="a" style="left:26px;top:196.5px;width:671px;height:1px;background:#e6e6e6;"></div>
<div class="a" style="left:26px;top:213.5px;width:671px;height:1px;background:#e6e6e6;"></div>
<div class="a" style="left:26px;top:230.5px;width:671px;height:1px;background:#e6e6e6;"></div>
<div class="a" style="left:26px;top:247.5px;width:671px;height:1px;background:#e6e6e6;"></div>
<div class="a" style="left:26px;top:264.5px;width:671px;height:1px;background:#e6e6e6;"></div>
<div class="a" style="left:26px;top:281.5px;width:671px;height:1px;background:#e6e6e6;"></div>
<div class="a" style="left:26px;top:298.5px;width:671px;height:1px;background:#e6e6e6;"></div>
<div class="a" style="left:26px;top:315.5px;width:671px;height:1px;background:#e6e6e6;"></div>
<div class="a" style="left:26px;top:332.5px;width:671px;height:1px;background:#e6e6e6;"></div>
<div class="a" style="left:26px;top:349.5px;width:671px;height:1px;background:#e6e6e6;"></div>
<div class="a" style="left:26px;top:366.5px;width:671px;height:1px;background:#e6e6e6;"></div>
<div class="a" style="left:26px;top:383.5px;width:671px;height:1px;background:#e6e6e6;"></div>
<div class="a" style="left:26px;top:400.5px;width:671px;height:1px;background:#e6e6e6;"></div>
<div class="a" style="left:26px;top:417.5px;width:671px;height:1px;background:#e6e6e6;"></div>
<div class="a" style="left:26px;top:434.5px;width:671px;height:1px;background:#e6e6e6;"></div>
<div class="a" style="left:26px;top:451.5px;width:671px;height:1px;background:#e6e6e6;"></div>
<div class="a" style="left:26px;top:468.5px;width:671px;height:1px;background:#e6e6e6;"></div>
<div class="a" style="left:26px;top:193px;width:671px;height:0.6px;background:#e6e6e6;"></div>
<div class="a" style="left:177px;top:231px;width:104px;height:221px;background:#d0d0d0;"></div>
<div class="a" style="left:79px;top:196.5px;width:202px;height:1.2px;background:#1a1a1a;"></div>
<div class="a" style="left:79px;top:213.5px;width:202px;height:1.2px;background:#1a1a1a;"></div>
<div class="a" style="left:79px;top:230.5px;width:202px;height:1.2px;background:#1a1a1a;"></div>
<div class="a" style="left:79px;top:247.5px;width:202px;height:1.2px;background:#1a1a1a;"></div>
<div class="a" style="left:79px;top:264.5px;width:202px;height:1.2px;background:#1a1a1a;"></div>
<div class="a" style="left:79px;top:281.5px;width:202px;height:1.2px;background:#1a1a1a;"></div>
<div class="a" style="left:79px;top:298.5px;width:202px;height:1.2px;background:#1a1a1a;"></div>
<div class="a" style="left:79px;top:315.5px;width:202px;height:1.2px;background:#1a1a1a;"></div>
<div class="a" style="left:79px;top:332.5px;width:202px;height:1.2px;background:#1a1a1a;"></div>
<div class="a" style="left:79px;top:349.5px;width:202px;height:1.2px;background:#1a1a1a;"></div>
<div class="a" style="left:79px;top:366.5px;width:202px;height:1.2px;background:#1a1a1a;"></div>
<div class="a" style="left:79px;top:383.5px;width:202px;height:1.2px;background:#1a1a1a;"></div>
<div class="a" style="left:79px;top:400.5px;width:202px;height:1.2px;background:#1a1a1a;"></div>
<div class="a" style="left:79px;top:417.5px;width:202px;height:1.2px;background:#1a1a1a;"></div>
<div class="a" style="left:79px;top:434.5px;width:202px;height:1.2px;background:#1a1a1a;"></div>
<div class="a" style="left:79px;top:451.5px;width:202px;height:1.2px;background:#1a1a1a;"></div>
<div class="a" style="left:78.5px;top:197px;width:1.2px;height:255.5px;background:#1a1a1a;"></div>
<div class="a" style="left:176.5px;top:197px;width:1.2px;height:255.5px;background:#1a1a1a;"></div>
<div class="a" style="left:280.5px;top:197px;width:1.2px;height:255.5px;background:#1a1a1a;"></div>
<div class="t" style="left:28px;width:200px;text-align:center;top:201.28px;font-size:12.7px;color:#000;font-weight:bold;font-family:'Liberation Serif',serif;-webkit-text-stroke:0;-webkit-text-stroke:0.2px #000;">Product name</div>
<div class="t" style="left:129px;width:200px;text-align:center;top:201.28px;font-size:12.7px;color:#000;font-weight:bold;font-family:'Liberation Serif',serif;-webkit-text-stroke:0;-webkit-text-stroke:0.2px #000;">Quantity</div>
<div class="t" style="left:28px;width:200px;text-align:center;top:217.98px;font-size:12.7px;color:#000;font-weight:normal;font-family:'Liberation Serif',serif;">A</div>
<div class="t" style="left:129px;width:200px;text-align:center;top:217.98px;font-size:12.7px;color:#000;font-weight:normal;font-family:'Liberation Serif',serif;">50</div>
<div class="t" style="left:28px;width:200px;text-align:center;top:234.98px;font-size:12.7px;color:#000;font-weight:normal;font-family:'Liberation Serif',serif;">B</div>
<div class="t" style="left:129px;width:200px;text-align:center;top:234.98px;font-size:12.7px;color:#000;font-weight:normal;font-family:'Liberation Serif',serif;">60</div>
<div class="t" style="left:28px;width:200px;text-align:center;top:251.98px;font-size:12.7px;color:#000;font-weight:normal;font-family:'Liberation Serif',serif;">C</div>
<div class="t" style="left:129px;width:200px;text-align:center;top:251.98px;font-size:12.7px;color:#000;font-weight:normal;font-family:'Liberation Serif',serif;">70</div>
<div class="t" style="left:28px;width:200px;text-align:center;top:268.98px;font-size:12.7px;color:#000;font-weight:normal;font-family:'Liberation Serif',serif;">D</div>
<div class="t" style="left:129px;width:200px;text-align:center;top:268.98px;font-size:12.7px;color:#000;font-weight:normal;font-family:'Liberation Serif',serif;">80</div>
<div class="t" style="left:28px;width:200px;text-align:center;top:285.98px;font-size:12.7px;color:#000;font-weight:normal;font-family:'Liberation Serif',serif;">E</div>
<div class="t" style="left:129px;width:200px;text-align:center;top:285.98px;font-size:12.7px;color:#000;font-weight:normal;font-family:'Liberation Serif',serif;">16</div>
<div class="t" style="left:28px;width:200px;text-align:center;top:302.98px;font-size:12.7px;color:#000;font-weight:normal;font-family:'Liberation Serif',serif;">F</div>
<div class="t" style="left:129px;width:200px;text-align:center;top:302.98px;font-size:12.7px;color:#000;font-weight:normal;font-family:'Liberation Serif',serif;">18</div>
<div class="t" style="left:28px;width:200px;text-align:center;top:319.98px;font-size:12.7px;color:#000;font-weight:normal;font-family:'Liberation Serif',serif;">G</div>
<div class="t" style="left:129px;width:200px;text-align:center;top:319.98px;font-size:12.7px;color:#000;font-weight:normal;font-family:'Liberation Serif',serif;">90</div>
<div class="t" style="left:28px;width:200px;text-align:center;top:336.98px;font-size:12.7px;color:#000;font-weight:normal;font-family:'Liberation Serif',serif;">H</div>
<div class="t" style="left:129px;width:200px;text-align:center;top:336.98px;font-size:12.7px;color:#000;font-weight:normal;font-family:'Liberation Serif',serif;">80</div>
<div class="t" style="left:28px;width:200px;text-align:center;top:353.98px;font-size:12.7px;color:#000;font-weight:normal;font-family:'Liberation Serif',serif;">I</div>
<div class="t" style="left:129px;width:200px;text-align:center;top:353.98px;font-size:12.7px;color:#000;font-weight:normal;font-family:'Liberation Serif',serif;">64</div>
<div class="t" style="left:28px;width:200px;text-align:center;top:370.98px;font-size:12.7px;color:#000;font-weight:normal;font-family:'Liberation Serif',serif;">J</div>
<div class="t" style="left:129px;width:200px;text-align:center;top:370.98px;font-size:12.7px;color:#000;font-weight:normal;font-family:'Liberation Serif',serif;">48</div>
<div class="t" style="left:28px;width:200px;text-align:center;top:387.98px;font-size:12.7px;color:#000;font-weight:normal;font-family:'Liberation Serif',serif;">K</div>
<div class="t" style="left:129px;width:200px;text-align:center;top:387.98px;font-size:12.7px;color:#000;font-weight:normal;font-family:'Liberation Serif',serif;">46</div>
<div class="t" style="left:28px;width:200px;text-align:center;top:404.98px;font-size:12.7px;color:#000;font-weight:normal;font-family:'Liberation Serif',serif;">L</div>
<div class="t" style="left:129px;width:200px;text-align:center;top:404.98px;font-size:12.7px;color:#000;font-weight:normal;font-family:'Liberation Serif',serif;">97</div>
<div class="t" style="left:28px;width:200px;text-align:center;top:421.98px;font-size:12.7px;color:#000;font-weight:normal;font-family:'Liberation Serif',serif;">M</div>
<div class="t" style="left:129px;width:200px;text-align:center;top:421.98px;font-size:12.7px;color:#000;font-weight:normal;font-family:'Liberation Serif',serif;">52</div>
<div class="t" style="left:28px;width:200px;text-align:center;top:438.98px;font-size:12.7px;color:#000;font-weight:normal;font-family:'Liberation Serif',serif;">N</div>
<div class="t" style="left:129px;width:200px;text-align:center;top:438.98px;font-size:12.7px;color:#000;font-weight:normal;font-family:'Liberation Serif',serif;">26</div>
<div class="a" style="left:176.5px;top:213.5px;width:105.5px;height:239.5px;background:transparent;border:1.6px solid #1e7b45"></div>
<div class="a" style="left:279px;top:451px;width:4px;height:4px;background:#1e7b45;border:0.8px solid #fff"></div>
<div class="a" style="left:697px;top:178px;width:18px;height:292px;background:#2b2b2b;"></div>
<div class="a" style="left:697px;top:193px;width:1.3px;height:277px;background:#cfcfcf;"></div>
<svg style="left:702.5px;top:182px;" width="7.5" height="5" viewBox="0 0 7.5 5"><path d="M3.75 0 L7.5 5 H0 Z" fill="#d0d0d0"/></svg>
<div class="a" style="left:703px;top:203px;width:6.5px;height:217px;background:#bdbdbd;border-radius:3px"></div>
<svg style="left:702.5px;top:463.5px;" width="7.5" height="5" viewBox="0 0 7.5 5"><path d="M0 0 H7.5 L3.75 5 Z" fill="#d0d0d0"/></svg>
<div class="a" style="left:4.2px;top:471px;width:711px;height:24px;background:#2b2b2b;"></div>
<svg style="left:25.2px;top:479.5px;" width="5" height="9" viewBox="0 0 5 9"><path d="M4.5 0.5 L0.8 4.5 L4.5 8.5" fill="none" stroke="#9a9a9a" stroke-width="1.1"/></svg>
<svg style="left:52px;top:479.5px;" width="5" height="9" viewBox="0 0 5 9"><path d="M0.5 0.5 L4.2 4.5 L0.5 8.5" fill="none" stroke="#9a9a9a" stroke-width="1.1"/></svg>
<div class="a" style="left:92px;top:471px;width:59px;height:5px;background:#ffffff;"></div>
<div class="a" style="left:92px;top:471px;width:5px;height:5px;background:#2b2b2b;border-top-right-radius:5px"></div>
<div class="a" style="left:146px;top:471px;width:5px;height:5px;background:#2b2b2b;border-top-left-radius:5px"></div>
<div class="a" style="left:97px;top:471px;width:49px;height:23.5px;background:#f7f7f7;border-radius:0 0 5px 5px"></div>
<div class="t" style="left:104.00px;top:477.86px;font-size:10.5px;color:#1a1a1a;font-weight:bold;font-family:'Liberation Sans',sans-serif;transform:scaleX(1.0147);transform-origin:0 0;-webkit-text-stroke:0;">Sheet2</div>
<div class="a" style="left:104px;top:490.3px;width:34.5px;height:1.6px;background:#1e7b45;"></div>
<div class="a" style="left:149px;top:477px;width:1px;height:14px;background:#6a6a6a;"></div>
<svg style="left:183px;top:479px;" width="10" height="10" viewBox="0 0 10 10"><path d="M5 0 V10 M0 5 H10" stroke="#e0e0e0" stroke-width="1.2"/></svg>
<div class="a" style="left:432.5px;top:479.6px;width:1.8px;height:1.8px;background:#e0e0e0;border-radius:1px"></div>
<div class="a" style="left:432.5px;top:483.6px;width:1.8px;height:1.8px;background:#e0e0e0;border-radius:1px"></div>
<div class="a" style="left:432.5px;top:487.6px;width:1.8px;height:1.8px;background:#e0e0e0;border-radius:1px"></div>
<div class="a" style="left:446px;top:477px;width:248px;height:15px;background:#3a3a3a;border-radius:7px"></div>
<svg style="left:450px;top:480.5px;" width="6" height="8" viewBox="0 0 6 8"><path d="M6 0 V8 L0 4 Z" fill="#d0d0d0"/></svg>
<div class="a" style="left:460px;top:479.5px;width:206px;height:9.5px;background:#c4c4c4;border-radius:5px"></div>
<svg style="left:689.5px;top:480.5px;" width="6" height="8" viewBox="0 0 6 8"><path d="M0 0 V8 L6 4 Z" fill="#d0d0d0"/></svg>
<div class="a" style="left:387px;top:88px;width:158px;height:268.5px;background:#474747;border:1px solid #5c5c5c"></div>
<div class="a" style="left:389px;top:126.5px;width:155px;height:40.5px;background:#545454;"></div>
<svg style="left:401.1px;top:99.1px;" width="26" height="21.8" viewBox="0 0 26 21.8"><rect x="6" y="5.9" width="11" height="5.5" fill="#f0a830"/><rect x="0.55" y="0.55" width="21.9" height="16.7" fill="none" stroke="#d2d2d2" stroke-width="1.1"/><path d="M6 0.6 V17.2 M17 0.6 V17.2 M0.6 5.93 H22.4 M0.6 11.87 H22.4" stroke="#d2d2d2" stroke-width="0.9"/><rect x="9.7" y="10.2" width="14.8" height="11.6" fill="#3d3d3d" stroke="#d2d2d2" stroke-width="1.1"/><path d="M19.8 13.4 L15.2 15.8 L19.8 18.2 M15.2 19.6 H19.8" fill="none" stroke="#d8d8d8" stroke-width="0.9"/></svg>
<svg style="left:401.1px;top:137.4px;" width="26" height="22.4" viewBox="0 0 26 22.4"><rect x="6" y="0" width="11" height="18.4" fill="#f0a830"/><path d="M11 11 V3.3 M7.8 6.0 L11 2.8 L14.2 6.0" fill="none" stroke="#e6e6e6" stroke-width="1.3"/><rect x="0.55" y="0.55" width="21.9" height="17.299999999999997" fill="none" stroke="#d2d2d2" stroke-width="1.1"/><path d="M6 0.6 V17.799999999999997 M17 0.6 V17.799999999999997 M0.6 6.13 H22.4 M0.6 12.27 H22.4" stroke="#d2d2d2" stroke-width="0.9"/><rect x="9.7" y="10.5" width="14.8" height="11.6" fill="#3d3d3d" stroke="#d2d2d2" stroke-width="1.1"/><text x="12.899999999999999" y="19.7" font-size="8.5" fill="#d2d2d2" font-family="Liberation Sans" transform="scale(0.9 1)" transform-origin="9.7 10.5">10</text></svg>
<svg style="left:401.1px;top:178px;" width="26" height="21.8" viewBox="0 0 26 21.8"><rect x="4.6" y="0.8" width="7" height="5.2" fill="#1f86e0"/><rect x="4.6" y="6" width="2.6" height="6" fill="#1f86e0"/><rect x="4.6" y="12" width="5" height="5.2" fill="#1f86e0"/><rect x="0.55" y="0.55" width="21.9" height="16.7" fill="none" stroke="#d2d2d2" stroke-width="1.1"/><path d="M4.6 0.6 V17.2 M18 0.6 V17.2 M0.6 5.93 H22.4 M0.6 11.87 H22.4" stroke="#d2d2d2" stroke-width="0.9"/></svg>
<svg style="left:401.1px;top:216.7px;" width="26" height="21.8" viewBox="0 0 26 21.8"><rect x="4.6" y="0.8" width="13.4" height="5.2" fill="#1f7ad8"/><rect x="4.6" y="6" width="13.4" height="6" fill="#f0a830"/><rect x="4.6" y="12" width="13.4" height="5.2" fill="#e0281c"/><rect x="0.55" y="0.55" width="21.9" height="16.7" fill="none" stroke="#d2d2d2" stroke-width="1.1"/><path d="M4.6 0.6 V17.2 M18 0.6 V17.2 M0.6 5.93 H22.4 M0.6 11.87 H22.4" stroke="#d2d2d2" stroke-width="0.9"/></svg>
<svg style="left:401.1px;top:255px;" width="26" height="21.8" viewBox="0 0 26 21.8"><circle cx="7.2" cy="3.1" r="1.1" fill="#2f8fdd"/><circle cx="7.2" cy="8.9" r="1.1" fill="#e0281c"/><circle cx="7.2" cy="14.7" r="1.1" fill="#2f8fdd"/><path d="M10 3.1 H16 M10 8.9 H16 M10 14.7 H16" stroke="#8a8a8a" stroke-width="0.8"/><rect x="0.55" y="0.55" width="21.9" height="16.7" fill="none" stroke="#d2d2d2" stroke-width="1.1"/><path d="M4.6 0.6 V17.2 M18 0.6 V17.2 M0.6 5.93 H22.4 M0.6 11.87 H22.4" stroke="#d2d2d2" stroke-width="0.9"/></svg>
<div class="t" style="left:431.60px;top:106.1px;font-size:10px;color:#f8f8f8;font-weight:bold;font-family:'Liberation Sans',sans-serif;transform:scaleX(0.9340);transform-origin:0 0;-webkit-text-stroke:0;-webkit-text-stroke:0.2px #f8f8f8;"><u>H</u>ighlight Cells Rules</div>
<svg style="left:532.3px;top:105.2px;" width="5.5" height="9.5" viewBox="0 0 5.5 9.5"><path d="M0.5 0.5 L5 4.75 L0.5 9" fill="none" stroke="#d0d0d0" stroke-width="1"/></svg>
<div class="t" style="left:431.60px;top:145.1px;font-size:10px;color:#f8f8f8;font-weight:bold;font-family:'Liberation Sans',sans-serif;transform:scaleX(0.9988);transform-origin:0 0;-webkit-text-stroke:0;-webkit-text-stroke:0.2px #f8f8f8;"><u>T</u>op/Bottom Rules</div>
<svg style="left:532.3px;top:144.2px;" width="5.5" height="9.5" viewBox="0 0 5.5 9.5"><path d="M0.5 0.5 L5 4.75 L0.5 9" fill="none" stroke="#d0d0d0" stroke-width="1"/></svg>
<div class="t" style="left:431.60px;top:185.3px;font-size:10px;color:#f8f8f8;font-weight:bold;font-family:'Liberation Sans',sans-serif;transform:scaleX(0.9383);transform-origin:0 0;-webkit-text-stroke:0;-webkit-text-stroke:0.2px #f8f8f8;"><u>D</u>ata Bars</div>
<svg style="left:532.3px;top:184.39999999999998px;" width="5.5" height="9.5" viewBox="0 0 5.5 9.5"><path d="M0.5 0.5 L5 4.75 L0.5 9" fill="none" stroke="#d0d0d0" stroke-width="1"/></svg>
<div class="t" style="left:431.60px;top:224.4px;font-size:10px;color:#f8f8f8;font-weight:bold;font-family:'Liberation Sans',sans-serif;transform:scaleX(0.8869);transform-origin:0 0;-webkit-text-stroke:0;-webkit-text-stroke:0.2px #f8f8f8;">Color <u>S</u>cales</div>
<svg style="left:532.3px;top:223.5px;" width="5.5" height="9.5" viewBox="0 0 5.5 9.5"><path d="M0.5 0.5 L5 4.75 L0.5 9" fill="none" stroke="#d0d0d0" stroke-width="1"/></svg>
<div class="t" style="left:431.60px;top:262.5px;font-size:10px;color:#f8f8f8;font-weight:bold;font-family:'Liberation Sans',sans-serif;transform:scaleX(0.9111);transform-origin:0 0;-webkit-text-stroke:0;-webkit-text-stroke:0.2px #f8f8f8;"><u>I</u>con Sets</div>
<svg style="left:532.3px;top:261.59999999999997px;" width="5.5" height="9.5" viewBox="0 0 5.5 9.5"><path d="M0.5 0.5 L5 4.75 L0.5 9" fill="none" stroke="#d0d0d0" stroke-width="1"/></svg>
<div class="a" style="left:389px;top:285px;width:155px;height:1px;background:#5e5e5e;"></div>
<svg style="left:397.3px;top:291px;" width="13.5" height="12" viewBox="0 0 13.5 12"><rect x="0.55" y="0.55" width="12.4" height="10.9" fill="none" stroke="#d2d2d2" stroke-width="1"/><path d="M3.4 0.6 V11.4 M10.1 0.6 V11.4 M0.6 3.2 H12.9 M0.6 8.8 H12.9" stroke="#d2d2d2" stroke-width="0.8"/><rect x="3.8" y="3.6" width="5.9" height="4.8" fill="#f0a830"/></svg>
<svg style="left:397.3px;top:314px;" width="13.5" height="12" viewBox="0 0 13.5 12"><rect x="0.55" y="0.55" width="12.4" height="10.9" fill="none" stroke="#d2d2d2" stroke-width="1"/><path d="M3.4 0.6 V11.4 M10.1 0.6 V11.4 M0.6 3.2 H12.9 M0.6 8.8 H12.9" stroke="#d2d2d2" stroke-width="0.8"/><rect x="3.8" y="3.6" width="5.9" height="4.8" fill="#f0a830"/><path d="M6.8 10.8 L11.3 6.3 L14.3 9.3 L9.8 13.8 Z" fill="#474747" stroke="#c25bd6" stroke-width="1.2"/><path d="M8.3 12.3 L11 9.6" stroke="#c25bd6" stroke-width="0.8"/></svg>
<svg style="left:396.5px;top:336.5px;" width="15" height="13" viewBox="0 0 15 13"><path d="M0.6 11.5 V0.6 H12.5" fill="none" stroke="#d2d2d2" stroke-width="0.9"/></svg>
<svg style="left:398.3px;top:337.7px;" width="13.5" height="12" viewBox="0 0 13.5 12"><rect x="0.55" y="0.55" width="12.4" height="10.9" fill="none" stroke="#d2d2d2" stroke-width="1"/><path d="M3.4 0.6 V11.4 M10.1 0.6 V11.4 M0.6 3.2 H12.9 M0.6 8.8 H12.9" stroke="#d2d2d2" stroke-width="0.8"/><rect x="3.8" y="3.6" width="5.9" height="4.8" fill="#f0a830"/></svg>
<div class="t" style="left:417.80px;top:294.1px;font-size:10px;color:#e6e6e6;font-weight:normal;font-family:'Liberation Sans',sans-serif;transform:scaleX(0.9255);transform-origin:0 0;"><u>N</u>ew Rule...</div>
<div class="t" style="left:417.80px;top:317.1px;font-size:10px;color:#e6e6e6;font-weight:normal;font-family:'Liberation Sans',sans-serif;transform:scaleX(0.9192);transform-origin:0 0;"><u>C</u>lear Rules</div>
<div class="t" style="left:416.86px;top:340.6px;font-size:10px;color:#e6e6e6;font-weight:normal;font-family:'Liberation Sans',sans-serif;transform:scaleX(0.9394);transform-origin:0 0;">Manage <u>R</u>ules...</div>
<svg style="left:532.3px;top:316.2px;" width="5.5" height="9.5" viewBox="0 0 5.5 9.5"><path d="M0.5 0.5 L5 4.75 L0.5 9" fill="none" stroke="#d0d0d0" stroke-width="1"/></svg>
<div class="a" style="left:389px;top:126px;width:155.5px;height:41px;background:transparent;border:3px solid #e8141c"></div>
<div class="a" style="left:545px;top:127.5px;width:150.5px;height:259.5px;background:#474747;border:1px solid #5c5c5c"></div>
<div class="a" style="left:549px;top:207px;width:141px;height:38.5px;background:#545454;"></div>
<svg style="left:558.1px;top:139.1px;" width="26" height="21.8" viewBox="0 0 26 21.8"><rect x="6" y="0" width="11" height="17.8" fill="#f0a830"/><path d="M11 10.5 V2.7 M7.8 5.4 L11 2.2 L14.2 5.4" fill="none" stroke="#e6e6e6" stroke-width="1.3"/><rect x="0.55" y="0.55" width="21.9" height="16.7" fill="none" stroke="#d2d2d2" stroke-width="1.1"/><path d="M6 0.6 V17.2 M17 0.6 V17.2 M0.6 5.93 H22.4 M0.6 11.87 H22.4" stroke="#d2d2d2" stroke-width="0.9"/><rect x="9.7" y="10.2" width="14.8" height="11.6" fill="#3d3d3d" stroke="#d2d2d2" stroke-width="1.1"/><text x="12.899999999999999" y="19.4" font-size="8.5" fill="#d2d2d2" font-family="Liberation Sans" transform="scale(0.9 1)" transform-origin="9.7 10.2">10</text></svg>
<div class="t" style="left:588.60px;top:147.1px;font-size:10px;color:#f8f8f8;font-weight:bold;font-family:'Liberation Sans',sans-serif;transform:scaleX(0.9913);transform-origin:0 0;-webkit-text-stroke:0;-webkit-text-stroke:0.2px #f8f8f8;"><u>T</u>op 10 Items...</div>
<svg style="left:558.1px;top:176.9px;" width="26" height="21.8" viewBox="0 0 26 21.8"><rect x="6" y="0" width="11" height="17.8" fill="#f0a830"/><path d="M11 10.5 V2.7 M7.8 5.4 L11 2.2 L14.2 5.4" fill="none" stroke="#e6e6e6" stroke-width="1.3"/><rect x="0.55" y="0.55" width="21.9" height="16.7" fill="none" stroke="#d2d2d2" stroke-width="1.1"/><path d="M6 0.6 V17.2 M17 0.6 V17.2 M0.6 5.93 H22.4 M0.6 11.87 H22.4" stroke="#d2d2d2" stroke-width="0.9"/><rect x="9.7" y="10.2" width="14.8" height="11.6" fill="#3d3d3d" stroke="#d2d2d2" stroke-width="1.1"/><circle cx="14.7" cy="13.799999999999999" r="1.3" fill="none" stroke="#d2d2d2" stroke-width="0.8"/><circle cx="19.5" cy="18.2" r="1.3" fill="none" stroke="#d2d2d2" stroke-width="0.8"/><path d="M20.0 12.399999999999999 L14.2 19.6" stroke="#d2d2d2" stroke-width="0.8"/></svg>
<div class="t" style="left:588.60px;top:184.9px;font-size:10px;color:#f8f8f8;font-weight:bold;font-family:'Liberation Sans',sans-serif;transform:scaleX(1.0078);transform-origin:0 0;-webkit-text-stroke:0;-webkit-text-stroke:0.2px #f8f8f8;">To<u>p</u> 10 %...</div>
<svg style="left:558.1px;top:215.79999999999998px;" width="26" height="21.8" viewBox="0 0 26 21.8"><rect x="6" y="0" width="11" height="17.8" fill="#f0a830"/><path d="M11 1.5 V9.5 M7.8 6.8 L11 10 L14.2 6.8" fill="none" stroke="#e6e6e6" stroke-width="1.3"/><rect x="0.55" y="0.55" width="21.9" height="16.7" fill="none" stroke="#d2d2d2" stroke-width="1.1"/><path d="M6 0.6 V17.2 M17 0.6 V17.2 M0.6 5.93 H22.4 M0.6 11.87 H22.4" stroke="#d2d2d2" stroke-width="0.9"/><rect x="9.7" y="10.2" width="14.8" height="11.6" fill="#3d3d3d" stroke="#d2d2d2" stroke-width="1.1"/><text x="12.899999999999999" y="19.4" font-size="8.5" fill="#d2d2d2" font-family="Liberation Sans" transform="scale(0.9 1)" transform-origin="9.7 10.2">10</text></svg>
<div class="t" style="left:588.60px;top:223.8px;font-size:10px;color:#f8f8f8;font-weight:bold;font-family:'Liberation Sans',sans-serif;transform:scaleX(0.9988);transform-origin:0 0;-webkit-text-stroke:0;-webkit-text-stroke:0.2px #f8f8f8;"><u>B</u>ottom 10 Items...</div>
<svg style="left:558.1px;top:254.6px;" width="26" height="21.8" viewBox="0 0 26 21.8"><rect x="6" y="0" width="11" height="17.8" fill="#f0a830"/><path d="M11 1.5 V9.5 M7.8 6.8 L11 10 L14.2 6.8" fill="none" stroke="#e6e6e6" stroke-width="1.3"/><rect x="0.55" y="0.55" width="21.9" height="16.7" fill="none" stroke="#d2d2d2" stroke-width="1.1"/><path d="M6 0.6 V17.2 M17 0.6 V17.2 M0.6 5.93 H22.4 M0.6 11.87 H22.4" stroke="#d2d2d2" stroke-width="0.9"/><rect x="9.7" y="10.2" width="14.8" height="11.6" fill="#3d3d3d" stroke="#d2d2d2" stroke-width="1.1"/><circle cx="14.7" cy="13.799999999999999" r="1.3" fill="none" stroke="#d2d2d2" stroke-width="0.8"/><circle cx="19.5" cy="18.2" r="1.3" fill="none" stroke="#d2d2d2" stroke-width="0.8"/><path d="M20.0 12.399999999999999 L14.2 19.6" stroke="#d2d2d2" stroke-width="0.8"/></svg>
<div class="t" style="left:588.60px;top:262.6px;font-size:10px;color:#f8f8f8;font-weight:bold;font-family:'Liberation Sans',sans-serif;transform:scaleX(0.9913);transform-origin:0 0;-webkit-text-stroke:0;-webkit-text-stroke:0.2px #f8f8f8;">B<u>o</u>ttom 10 %...</div>
<svg style="left:558.1px;top:293.8px;" width="26" height="21.8" viewBox="0 0 26 21.8"><rect x="6" y="0" width="11" height="17.8" fill="#f0a830"/><path d="M11 10.5 V2.7 M7.8 5.4 L11 2.2 L14.2 5.4" fill="none" stroke="#e6e6e6" stroke-width="1.3"/><rect x="0.55" y="0.55" width="21.9" height="16.7" fill="none" stroke="#d2d2d2" stroke-width="1.1"/><path d="M6 0.6 V17.2 M17 0.6 V17.2 M0.6 5.93 H22.4 M0.6 11.87 H22.4" stroke="#d2d2d2" stroke-width="0.9"/><rect x="9.7" y="10.2" width="14.8" height="11.6" fill="#3d3d3d" stroke="#d2d2d2" stroke-width="1.1"/><text x="14.7" y="19.6" font-size="9" font-style="italic" fill="#d2d2d2" font-family="Liberation Serif">x</text><path d="M14.7 13.2 H19.7" stroke="#d2d2d2" stroke-width="0.8"/></svg>
<div class="t" style="left:588.60px;top:301.8px;font-size:10px;color:#f8f8f8;font-weight:bold;font-family:'Liberation Sans',sans-serif;transform:scaleX(0.9700);transform-origin:0 0;-webkit-text-stroke:0;-webkit-text-stroke:0.2px #f8f8f8;"><u>A</u>bove Average...</div>
<svg style="left:558.1px;top:332.1px;" width="26" height="21.8" viewBox="0 0 26 21.8"><rect x="6" y="0" width="11" height="17.8" fill="#f0a830"/><path d="M11 1.5 V9.5 M7.8 6.8 L11 10 L14.2 6.8" fill="none" stroke="#e6e6e6" stroke-width="1.3"/><rect x="0.55" y="0.55" width="21.9" height="16.7" fill="none" stroke="#d2d2d2" stroke-width="1.1"/><path d="M6 0.6 V17.2 M17 0.6 V17.2 M0.6 5.93 H22.4 M0.6 11.87 H22.4" stroke="#d2d2d2" stroke-width="0.9"/><rect x="9.7" y="10.2" width="14.8" height="11.6" fill="#3d3d3d" stroke="#d2d2d2" stroke-width="1.1"/><text x="14.7" y="19.6" font-size="9" font-style="italic" fill="#d2d2d2" font-family="Liberation Serif">x</text><path d="M14.7 13.2 H19.7" stroke="#d2d2d2" stroke-width="0.8"/></svg>
<div class="t" style="left:588.60px;top:340.1px;font-size:10px;color:#f8f8f8;font-weight:bold;font-family:'Liberation Sans',sans-serif;transform:scaleX(0.9696);transform-origin:0 0;-webkit-text-stroke:0;-webkit-text-stroke:0.2px #f8f8f8;">Below A<u>v</u>erage...</div>
<div class="a" style="left:547px;top:361px;width:146.5px;height:1px;background:#5e5e5e;"></div>
<div class="t" style="left:575.00px;top:370.4px;font-size:10px;color:#e6e6e6;font-weight:normal;font-family:'Liberation Sans',sans-serif;transform:scaleX(0.9322);transform-origin:0 0;"><u>M</u>ore Rules...</div>
<div class="a" style="left:548px;top:206px;width:143.5px;height:40.5px;background:transparent;border:3px solid #e8141c"></div>
<div class="a" style="left:381px;top:62px;width:154px;height:31px;background:transparent;border:3px solid #e8141c"></div></body></html>
